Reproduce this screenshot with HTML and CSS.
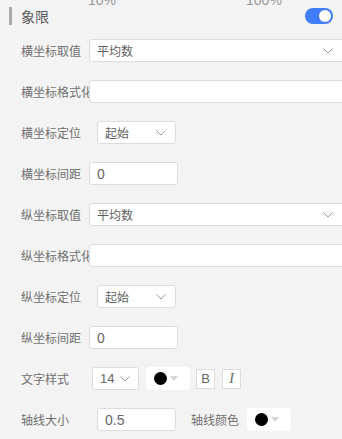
FILE: index.html
```html
<!DOCTYPE html>
<html lang="zh">
<head>
<meta charset="utf-8">
<link rel="stylesheet" href="styles.css">
</head>
<body>
<div class="panel">
  <div class="scale-row"><span class="scale-min">10%</span><span class="scale-max">100%</span></div>

  <div class="title-row">
    <span class="title-bar"></span>
    <span class="title-text">象限</span>
    <span class="toggle on"><span class="knob"></span></span>
  </div>

  <div class="form-row">
    <span class="label">横坐标取值</span>
    <div class="box select wide"><span class="val">平均数</span><svg class="chev" viewBox="0 0 10 6"><path d="M0.5 0.5 L5 5 L9.5 0.5"/></svg></div>
  </div>
  <div class="form-row">
    <span class="label">横坐标格式化</span>
    <div class="box wide"></div>
  </div>
  <div class="form-row">
    <span class="label">横坐标定位</span>
    <div class="box select pos"><span class="val">起始</span><svg class="chev" viewBox="0 0 10 6"><path d="M0.5 0.5 L5 5 L9.5 0.5"/></svg></div>
  </div>
  <div class="form-row">
    <span class="label">横坐标间距</span>
    <div class="box gap"><span class="val num">0</span></div>
  </div>

  <div class="form-row">
    <span class="label">纵坐标取值</span>
    <div class="box select wide"><span class="val">平均数</span><svg class="chev" viewBox="0 0 10 6"><path d="M0.5 0.5 L5 5 L9.5 0.5"/></svg></div>
  </div>
  <div class="form-row">
    <span class="label">纵坐标格式化</span>
    <div class="box wide"></div>
  </div>
  <div class="form-row">
    <span class="label">纵坐标定位</span>
    <div class="box select pos"><span class="val">起始</span><svg class="chev" viewBox="0 0 10 6"><path d="M0.5 0.5 L5 5 L9.5 0.5"/></svg></div>
  </div>
  <div class="form-row">
    <span class="label">纵坐标间距</span>
    <div class="box gap"><span class="val num">0</span></div>
  </div>

  <div class="form-row">
    <span class="label">文字样式</span>
    <div class="box select fontsize"><span class="val num small">14</span><svg class="chev" viewBox="0 0 10 6"><path d="M0.5 0.5 L5 5 L9.5 0.5"/></svg></div>
    <div class="color-pick cp-text"><span class="dot"></span><span class="tri"></span></div>
    <span class="style-btn bold">B</span>
    <span class="style-btn italic">I</span>
  </div>
  <div class="form-row">
    <span class="label">轴线大小</span>
    <div class="box pos"><span class="val num">0.5</span></div>
    <span class="label2">轴线颜色</span>
    <div class="color-pick cp-axis"><span class="dot"></span><span class="tri"></span></div>
  </div>
</div>
</body>
</html>
```

FILE: styles.css
```css
* { box-sizing: border-box; }
html, body {
  margin: 0;
  padding: 0;
  width: 342px;
  height: 439px;
  overflow: hidden;
  background: #f3f3f3;
  font-family: "Noto Sans CJK SC", "Noto Sans", sans-serif;
}
.panel { width: 342px; }

.scale-row {
  height: 14px;
  margin-top: -7px;
  display: flex;
  font-family: "Liberation Sans", sans-serif;
  font-size: 14px;
  line-height: 14px;
  color: #999;
}
.scale-min { margin-left: 88px; }
.scale-max { margin-left: 130px; }

.title-row {
  display: flex;
  align-items: center;
  height: 18px;
  margin-top: 0;
  padding-left: 9px;
  padding-right: 9px;
}
.title-bar {
  width: 3px;
  height: 18px;
  background: #aaa;
}
.title-text {
  margin-left: 9px;
  font-size: 14px;
  color: #5a5a5a;
  line-height: 18px;
}
.toggle {
  margin-left: auto;
  width: 28px;
  height: 16px;
  border-radius: 8px;
  background: #3f7ef6;
  display: flex;
  align-items: center;
  justify-content: flex-end;
  padding-right: 2px;
}
.knob {
  width: 12px;
  height: 12px;
  border-radius: 50%;
  background: #fff;
}

.form-row {
  display: flex;
  align-items: center;
  height: 23px;
  margin-top: 18px;
  padding-left: 21px;
}
.title-row + .form-row { margin-top: 14px; }

.label {
  flex: 0 0 68px;
  width: 68px;
  overflow: hidden;
  white-space: nowrap;
  font-size: 12px;
  color: #707070;
}
.label2 {
  margin-left: 15px;
  font-size: 12px;
  color: #707070;
  white-space: nowrap;
}

.box {
  flex-shrink: 0;
  height: 23px;
  background: #fff;
  border: 1px solid #dcdcdc;
  border-radius: 3px;
  display: flex;
  align-items: center;
  padding-left: 7px;
  padding-right: 9px;
}
.val {
  font-size: 12px;
  color: #5f5f5f;
  white-space: nowrap;
}
.val.num {
  font-family: "Liberation Sans", sans-serif;
  font-size: 14px;
  color: #666;
}
.val.num.small { font-size: 13px; }
.select { justify-content: space-between; }
.chev {
  width: 10px;
  height: 6px;
  fill: none;
  stroke: #999;
  stroke-width: 1;
}
.wide { width: 256px; padding-right: 11px; }
.pos { width: 79px; margin-left: 8px; }
.gap { width: 89px; }
.fontsize { width: 47px; margin-left: 3px; padding-right: 8px; }

.color-pick {
  flex-shrink: 0;
  width: 44px;
  height: 23px;
  background: #fff;
  border-radius: 3px;
  display: flex;
  align-items: center;
  padding-left: 8px;
}
.cp-text { margin-left: 7px; }
.cp-axis { margin-left: 8px; }
.dot {
  width: 13px;
  height: 13px;
  border-radius: 50%;
  background: #000;
}
.tri {
  margin-left: 3px;
  width: 0;
  height: 0;
  border-left: 4px solid transparent;
  border-right: 4px solid transparent;
  border-top: 5px solid #d9d2d2;
}

.style-btn {
  flex-shrink: 0;
  width: 19px;
  height: 20px;
  border: 1px solid #dcdcdc;
  background: #fff;
  display: flex;
  align-items: center;
  justify-content: center;
  font-family: "Liberation Sans", sans-serif;
  font-size: 13px;
  color: #666;
}
.bold { margin-left: 6px; }
.italic {
  margin-left: 7px;
  font-family: "Liberation Serif", serif;
  font-style: italic;
  font-size: 14px;
}
```
